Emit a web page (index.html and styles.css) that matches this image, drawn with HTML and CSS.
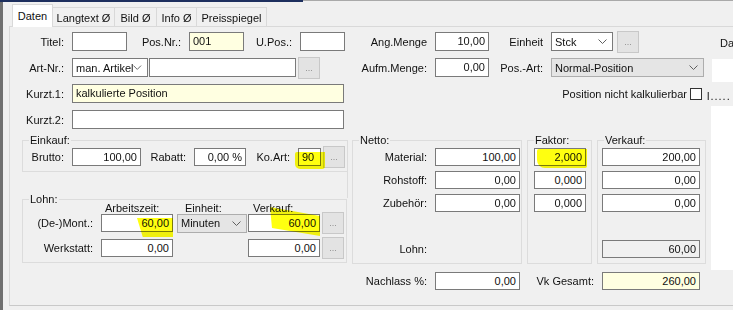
FILE: index.html
```html
<!DOCTYPE html>
<html lang="de">
<head>
    <meta charset="UTF-8">
    <title>Position bearbeiten</title>
    <link rel="stylesheet" href="styles.css">
</head>
<body>
    <div class="titlebar"><div class="caption"></div><div class="rest"></div></div>
    <div class="window">
        <div class="tabs">
            <div class="tab active t-daten">Daten</div>
            <div class="tab t-lang">Langtext Ø</div>
            <div class="tab t-bild">Bild Ø</div>
            <div class="tab t-info">Info Ø</div>
            <div class="tab t-preis">Preisspiegel</div>
        </div>

        <div class="page">
            <div class="main">
                <!-- Kopfdaten -->
                <div class="head">
                    <div class="row">
                        <span class="lbl w62">Titel:</span>
                        <span class="tb w55"></span>
                        <span class="lbl w62">Pos.Nr.:</span>
                        <span class="tb info w55">001</span>
                        <span class="lbl w56">U.Pos.:</span>
                        <span class="tb w45"></span>
                        <span class="lbl w90">Ang.Menge</span>
                        <span class="tb num w54">10,00</span>
                        <span class="lbl w62">Einheit</span>
                        <span class="cb w62">Stck <svg viewBox="0 0 9 5"><polyline points="0.5,0.5 4.5,4.5 8.5,0.5"/></svg></span>
                        <span class="btn ml4">...</span>
                    </div>
                    <div class="row">
                        <span class="lbl w62">Art-Nr.:</span>
                        <span class="cb w76">man. Artikel <svg viewBox="0 0 9 5"><polyline points="0.5,0.5 4.5,4.5 8.5,0.5"/></svg></span>
                        <span class="tb w147 ml1"></span>
                        <span class="btn ml2">...</span>
                        <span class="lbl w115">Aufm.Menge:</span>
                        <span class="tb num w54">0,00</span>
                        <span class="lbl w62">Pos.-Art:</span>
                        <span class="cb list w153">Normal-Position <svg viewBox="0 0 9 5"><polyline points="0.5,0.5 4.5,4.5 8.5,0.5"/></svg></span>
                    </div>
                    <div class="row">
                        <span class="lbl w62">Kurzt.1:</span>
                        <span class="tb info w272">kalkulierte Position</span>
                        <span class="lbl push">Position nicht kalkulierbar</span>
                        <span class="check"></span>
                    </div>
                    <div class="row">
                        <span class="lbl w62">Kurzt.2:</span>
                        <span class="tb w272"></span>
                    </div>
                </div>

                <div class="lower">
                    <div class="left">
                        <fieldset class="grp einkauf">
                            <legend>Einkauf:</legend>
                            <div class="line">
                                <span class="lbl w49">Brutto:</span>
                                <span class="tb num w69">100,00</span>
                                <span class="lbl w53">Rabatt:</span>
                                <span class="tb num w52">0,00 %</span>
                                <span class="lbl w52">Ko.Art:</span>
                                <span class="tb w23">90<i class="mark mark-koart"></i></span>
                                <span class="btn ml2">...</span>
                            </div>
                        </fieldset>
                        <div class="blank"></div>
                        <fieldset class="grp lohn">
                            <legend>Lohn:</legend>
                            <div class="line heads">
                                <span class="hd hd-zeit">Arbeitszeit:</span>
                                <span class="hd hd-einheit">Einheit:</span>
                                <span class="hd hd-vk">Verkauf:</span>
                            </div>
                            <div class="line">
                                <span class="lbl w78">(De-)Mont.:</span>
                                <span class="tb num w72">60,00<i class="mark mark-zeit"></i></span>
                                <span class="cb list w70 ml4">Minuten <svg viewBox="0 0 9 5"><polyline points="0.5,0.5 4.5,4.5 8.5,0.5"/></svg></span>
                                <span class="tb num w72 ml1">60,00<i class="mark mark-vk"></i></span>
                                <span class="btn ml2">...</span>
                            </div>
                            <div class="line second">
                                <span class="lbl w78">Werkstatt:</span>
                                <span class="tb num w72">0,00</span>
                                <span class="tb num w72 ml75">0,00</span>
                                <span class="btn ml2">...</span>
                            </div>
                        </fieldset>
                    </div>

                    <div class="right">
                        <div class="sums">
                            <fieldset class="grp">
                                <legend>Netto:</legend>
                                <div class="stack">
                                    <div class="line"><span class="lbl w82">Material:</span><span class="tb num w85">100,00</span></div>
                                    <div class="line"><span class="lbl w82">Rohstoff:</span><span class="tb num w85">0,00</span></div>
                                    <div class="line"><span class="lbl w82">Zubehör:</span><span class="tb num w85">0,00</span></div>
                                    <div class="line"></div>
                                    <div class="line"><span class="lbl w82">Lohn:</span></div>
                                </div>
                            </fieldset>
                            <fieldset class="grp faktor">
                                <legend>Faktor:</legend>
                                <div class="stack">
                                    <div class="line"><span class="tb num w52">2,000<i class="mark mark-faktor"></i></span></div>
                                    <div class="line"><span class="tb num w52">0,000</span></div>
                                    <div class="line"><span class="tb num w52">0,000</span></div>
                                </div>
                            </fieldset>
                            <fieldset class="grp verkauf">
                                <legend>Verkauf:</legend>
                                <div class="stack">
                                    <div class="line"><span class="tb num w98">200,00</span></div>
                                    <div class="line"><span class="tb num w98">0,00</span></div>
                                    <div class="line"><span class="tb num w98">0,00</span></div>
                                    <div class="line"></div>
                                    <div class="line"><span class="tb num ro w98">60,00</span></div>
                                </div>
                            </fieldset>
                        </div>
                        <div class="line total">
                            <span class="lbl w83">Nachlass %:</span>
                            <span class="tb num w85">0,00</span>
                            <span class="lbl w82">Vk Gesamt:</span>
                            <span class="tb num info w98">260,00</span>
                        </div>
                    </div>
                </div>
            </div>

            <div class="side">
                <span class="side-lbl">Da</span>
                <span class="side-box"></span>
                <span class="side-dots">l.....</span>
                <span class="side-panel"></span>
            </div>
        </div>
    </div>
</body>
</html>
```

FILE: styles.css
```css
* {
    box-sizing: border-box;
}
html, body {
    margin: 0;
}
body {
    width: 733px;
    height: 310px;
    overflow: hidden;
    background: #f0f0f0;
    font-family: "Liberation Sans", Arial, sans-serif;
    font-size: 11px;
    color: #111;
}

/* window chrome */
.titlebar {
    display: flex;
    height: 2px;
}
.titlebar .caption {
    width: 303px;
    background: #1d2f5e;
}
.titlebar .rest {
    flex: 1;
    height: 1px;
    background: #a9a9a9;
}
.window {
    width: 800px;
    height: 308px;
    border-left: 3px solid #707070;
}

/* tabs */
.tabs {
    display: flex;
    align-items: flex-end;
    height: 25px;
    margin-left: 6px;
    padding-left: 3px;
    border-bottom: 1px solid #d9d9d9;
}
.tab {
    height: 19px;
    padding-top: 3px;
    line-height: 14px;
    text-align: center;
    border: 1px solid #d9d9d9;
    border-bottom: 0;
    margin-left: -1px;
    background: #f0f0f0;
}
.tab.active {
    height: 23px;
    padding-top: 4px;
    margin-left: 0;
    margin-bottom: -1px;
    background: #fff;
    position: relative;
    z-index: 1;
}
.t-daten { width: 41px; }
.t-lang { width: 63px; }
.t-bild { width: 43px; }
.t-info { width: 41px; }
.t-preis { width: 71px; }

.page {
    display: flex;
    height: 279px;
    margin-left: 6px;
    border-left: 1px solid #d9d9d9;
    border-bottom: 1px solid #c9c9c9;
}
.main {
    width: 696px;
    flex: none;
}

/* rows and controls */
.head {
    display: flex;
    flex-direction: column;
    gap: 7px;
    padding-top: 5px;
}
.row {
    display: flex;
    align-items: center;
    height: 19px;
}
.line {
    display: flex;
    align-items: center;
    height: 18px;
}
.lbl {
    flex: none;
    text-align: right;
    padding-right: 8px;
    white-space: nowrap;
}
.lbl.push {
    margin-left: auto;
    padding-right: 0;
}
.tb {
    flex: none;
    position: relative;
    height: 19px;
    line-height: 17px;
    padding: 0 3px;
    border: 1px solid #7a7a7a;
    background: #fff;
    white-space: nowrap;
}
.lower .tb {
    height: 18px;
    line-height: 16px;
}
.tb.num { text-align: right; }
.tb.info { background: #ffffe1; }
.tb.ro { background: #f0f0f0; }

.cb {
    flex: none;
    display: flex;
    align-items: center;
    justify-content: space-between;
    height: 19px;
    padding: 0 5px 0 3px;
    border: 1px solid #7a7a7a;
    background: #fff;
    white-space: nowrap;
}
.cb.list {
    background: #e5e5e5;
    border-color: #adadad;
}
.cb svg {
    width: 9px;
    height: 5px;
    fill: none;
    stroke: #606060;
    stroke-width: 1;
}
.btn {
    flex: none;
    display: flex;
    align-items: flex-end;
    justify-content: center;
    width: 22px;
    height: 22px;
    padding-bottom: 5px;
    border: 1px solid #c8c8c8;
    background: #e3e3e3;
    color: #8e8e8e;
    font-size: 9px;
    line-height: 9px;
}
.check {
    flex: none;
    width: 12px;
    height: 12px;
    margin: 0 4px 0 3px;
    border: 1px solid #333;
    background: #fff;
}

/* widths */
.w23 { width: 23px; }
.w45 { width: 45px; }
.w49 { width: 49px; }
.w52 { width: 52px; }
.w53 { width: 53px; }
.w54 { width: 54px; }
.w55 { width: 55px; }
.w56 { width: 56px; }
.w62 { width: 62px; }
.w69 { width: 69px; }
.w70 { width: 70px; }
.w72 { width: 72px; }
.w76 { width: 76px; }
.w78 { width: 78px; }
.w82 { width: 82px; }
.w83 { width: 83px; }
.w85 { width: 85px; }
.w90 { width: 90px; }
.w98 { width: 98px; }
.w115 { width: 115px; }
.w147 { width: 147px; }
.w153 { width: 153px; }
.w272 { width: 272px; }
.ml1 { margin-left: 1px; }
.ml2 { margin-left: 2px; }
.ml4 { margin-left: 4px; }
.ml75 { margin-left: 75px; }

/* group boxes */
.grp {
    margin: 0;
    padding: 0;
    min-width: 0;
    border: 1px solid #dcdcdc;
}
.grp legend {
    margin-left: 6px;
    padding: 0 1px;
    line-height: 13px;
}
.lower {
    display: flex;
}
.left {
    width: 340px;
    flex: none;
    padding-left: 12px;
}
.einkauf {
    width: 326px;
    margin-top: 5px;
    padding: 1px 1px 5px 0;
}
.blank {
    width: 326px;
    height: 26px;
    border-right: 1px solid #dcdcdc;
}
.lohn {
    width: 325px;
    margin-top: -5px;
    padding: 0 0 5px 0;
}
.lohn .heads {
    height: 13px;
    margin-top: -5px;
}
.lohn .second {
    margin-top: 7px;
}
.hd { flex: none; }
.hd-zeit { width: 154px; padding-left: 82px; }
.hd-einheit { width: 71px; padding-left: 8px; }
.hd-vk { padding-left: 5px; }

.right {
    flex: 1;
    padding-left: 2px;
}
.sums {
    display: grid;
    grid-template-columns: 170px 65px 109px;
    column-gap: 5px;
    margin-top: 5px;
}
.stack {
    display: flex;
    flex-direction: column;
    gap: 5px;
    padding: 1px 0 5px;
}
.faktor .stack { padding-left: 6px; }
.verkauf .stack { padding-left: 4px; }
.total {
    margin-top: 8px;
}

/* marker strokes someone drew on the screenshot */
.mark {
    position: absolute;
    background: #ffff10;
    mix-blend-mode: multiply;
}
.mark-koart {
    left: -4px;
    top: 3px;
    width: 30px;
    height: 17px;
    border-radius: 2px 0 3px 5px;
}
.mark-faktor {
    left: 2px;
    top: 0;
    width: 50px;
    height: 19px;
    border-radius: 2px 0 2px 8px;
}
.mark-zeit {
    left: 35px;
    top: 3px;
    width: 36px;
    height: 19px;
    clip-path: polygon(0 0, 100% 0, 100% 100%, 16% 100%);
}
.mark-vk {
    left: 21px;
    top: -8px;
    width: 50px;
    height: 29px;
    clip-path: polygon(0 0, 100% 31%, 100% 100%, 4% 72%);
}

/* clipped controls at the right edge */
.side {
    flex: 1;
    display: flex;
    flex-direction: column;
    align-items: flex-start;
}
.side-lbl {
    margin-top: 10px;
    padding-left: 14px;
    line-height: 13px;
    white-space: nowrap;
}
.side-box {
    width: 40px;
    height: 23px;
    margin: 9px 0 0 6px;
    background: #fff;
}
.side-dots {
    margin: 8px 0 0 1px;
    line-height: 13px;
    letter-spacing: 1px;
    white-space: nowrap;
}
.side-panel {
    width: 40px;
    height: 164px;
    margin: 3px 0 0 5px;
    background: #fff;
}
```
